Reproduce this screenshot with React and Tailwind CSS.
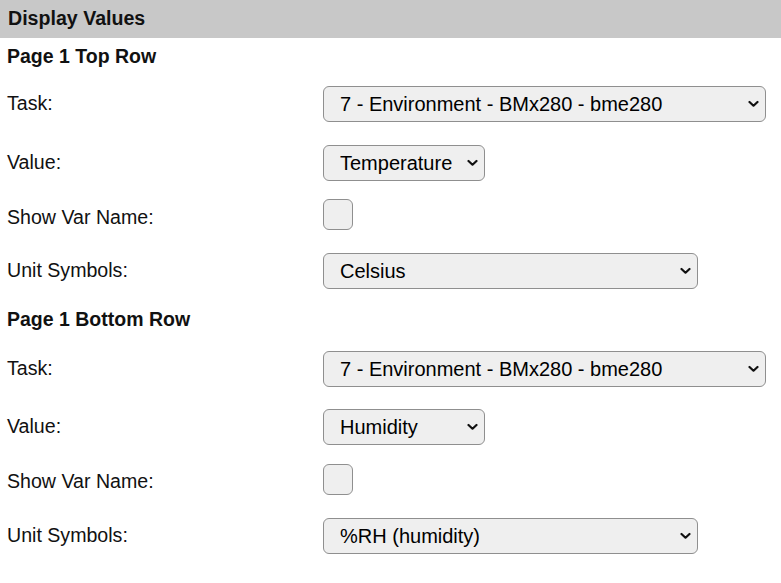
import React from "react";

const font = { fontFamily: '"Liberation Sans", Arial, sans-serif' };

function Chevron() {
  return (
    <svg
      className="pointer-events-none absolute right-[7px] top-1/2 -translate-y-1/2"
      width="11"
      height="7"
      viewBox="0 0 11 7"
      fill="none"
    >
      <path d="M1.5 1.5 L5.5 5.2 L9.5 1.5" stroke="#111" strokeWidth="2.2" strokeLinecap="round" strokeLinejoin="round" />
    </svg>
  );
}

function Select({ value, width }) {
  return (
    <div className={`relative ${width}`}>
      <select
        defaultValue={value}
        className="block h-[36px] w-full appearance-none rounded-[6px] border border-[#8f8f8f] bg-[#efefef] pl-[16px] pr-[24px] text-[20px] leading-[34px] text-black outline-none"
        style={font}
      >
        <option>{value}</option>
      </select>
      <Chevron />
    </div>
  );
}

function Checkbox() {
  return (
    <input
      type="checkbox"
      className="block h-[31px] w-[30px] appearance-none rounded-[6px] border border-[#8f8f8f] bg-[#efefef]"
    />
  );
}

function Row({ label, children, h, labelClass = "" }) {
  return (
    <div className={`flex items-center ${h}`}>
      <div className={`w-[323px] shrink-0 pl-[7px] text-[19.6px] text-[#111] ${labelClass}`}>{label}</div>
      <div>{children}</div>
    </div>
  );
}

function Section({ title, titleH, value, unit, hs }) {
  return (
    <>
      <div className={`flex items-center pl-[7px] text-[19.5px] font-bold text-[#111] ${titleH}`}>{title}</div>
      <Row label="Task:" h={hs[0]}>
        <Select value="7 - Environment - BMx280 - bme280" width="w-[443px]" />
      </Row>
      <Row label="Value:" h={hs[1]}>
        <Select value={value} width="w-[162px]" />
      </Row>
      <Row label="Show Var Name:" h={hs[2]} labelClass="mt-[6px]">
        <Checkbox />
      </Row>
      <Row label="Unit Symbols:" h={hs[3]}>
        <Select value={unit} width="w-[375px]" />
      </Row>
    </>
  );
}

export default function App() {
  return (
    <div className="min-h-[583px] w-[781px] bg-white" style={font}>
      <div className="flex h-[38px] items-center bg-[#c8c8c8] pl-[8px] text-[19.6px] font-bold text-[#111]">
        Display Values
      </div>
      <Section
        title="Page 1 Top Row"
        titleH="h-[37px]"
        value="Temperature"
        unit="Celsius"
        hs={["h-[58px]", "h-[60px]", "h-[43px]", "h-[70px]"]}
      />
      <Section
        title="Page 1 Bottom Row"
        titleH="h-[28px]"
        value="Humidity"
        unit="%RH (humidity)"
        hs={["h-[70px]", "h-[46px]", "h-[58px]", "h-[56px]"]}
      />
    </div>
  );
}
